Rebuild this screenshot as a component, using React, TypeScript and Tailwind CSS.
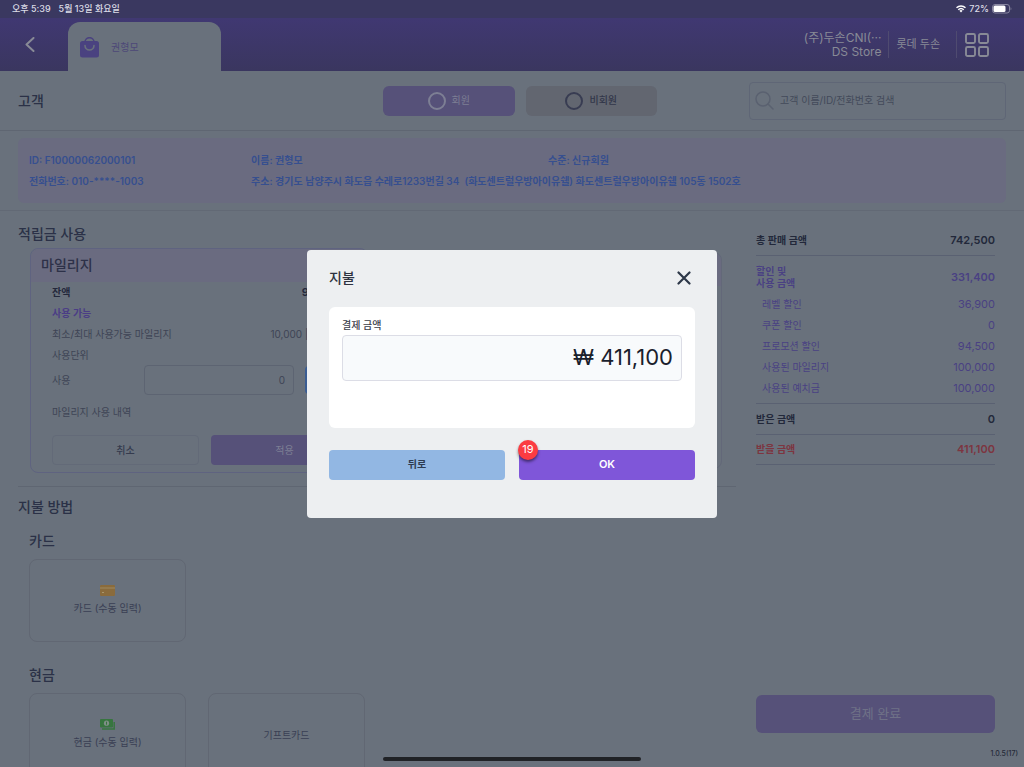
import React from "react";

const METHOD_TILE =
  "flex h-[83px] w-[157px] flex-col items-center justify-center gap-1 rounded-lg border border-[#616773] text-[10px] leading-4 text-[#3a3f54]";

const discounts: [string, string][] = [
  ["레벨 할인", "36,900"],
  ["쿠폰 할인", "0"],
  ["프로모션 할인", "94,500"],
  ["사용된 마일리지", "100,000"],
  ["사용된 예치금", "100,000"],
];

function StatusBar() {
  return (
    <div className="flex h-[18px] shrink-0 items-center justify-between bg-[#3a3860] px-3 text-[9px] font-medium text-[#dcdce6]">
      <div className="flex gap-2">
        <span>오후 5:39</span>
        <span>5월 13일 화요일</span>
      </div>
      <div className="flex items-center gap-[3px]">
        <svg width="10" height="8" viewBox="0 0 20 15" fill="none" stroke="#fff" strokeWidth="2.8">
          <path d="M1 5.2a13 13 0 0 1 18 0M4.5 9a8 8 0 0 1 11 0" />
          <path d="M6.8 11a4.600 4.600 0 0 1 6.400 0L10 14.600z" fill="#fff" stroke="none" />
        </svg>
        <span>72%</span>
        <svg width="20" height="10" viewBox="0 0 20 10">
          <rect x=".5" y=".5" width="17" height="8.5" rx="2.5" fill="none" stroke="#8886a0" />
          <rect x="1.5" y="1.5" width="12" height="6.5" rx="1.5" fill="#fff" />
          <path d="M18.6 3.2v3c1-.4 1-2.600 0-3" fill="#8886a0" />
        </svg>
      </div>
    </div>
  );
}

function NavBar() {
  return (
    <header className="flex h-[53px] shrink-0 items-stretch bg-linear-to-b from-[#403872] to-[#3a365f] text-[#888a96]">
      <button aria-label="뒤로 가기" className="flex w-[68px] items-center pl-[25px]">
        <svg width="10" height="15" viewBox="0 0 10 15" fill="none" stroke="currentColor" strokeWidth="2" strokeLinecap="round" strokeLinejoin="round">
          <path d="M8.500 1 1.500 7.500l7 6.500" />
        </svg>
      </button>
      <button className="mt-1 flex w-[153px] items-center gap-3 rounded-t-xl bg-[#69717c] pt-[2px] pl-3 text-[10px] text-[#4d4878]">
        <svg width="19" height="21" viewBox="0 0 19 21" fill="none">
          <rect y="4" width="19" height="16.500" rx="2.500" fill="#4a4280" />
          <path d="M5 5a4.500 4.300 0 0 1 9 0" stroke="#4a4280" strokeWidth="1.600" />
          <path d="M5 8.500a4.500 4.500 0 0 0 9 0" stroke="#69717c" strokeWidth="1.600" strokeLinecap="round" />
        </svg>
        권형모
      </button>
      <div className="ml-auto flex items-center pr-[35px]">
        <div className="pr-[7px] text-right text-xs leading-[14px]">
          <div>(주)두손CNI(···</div>
          <div>DS Store</div>
        </div>
        <div className="flex h-[27px] items-center border-x border-[#4f4b70] pr-4 pl-[7px] text-[11px]">롯데 두손</div>
        <button aria-label="메뉴" className="ml-2">
          <svg width="24" height="24" viewBox="0 0 24 24" fill="none" stroke="currentColor" strokeWidth="1.900">
            <rect x="1" y="1" width="9" height="9" rx="1.500" />
            <rect x="14" y="1" width="9" height="9" rx="1.500" />
            <rect x="1" y="14" width="9" height="9" rx="1.500" />
            <rect x="14" y="14" width="9" height="9" rx="1.500" />
          </svg>
        </button>
      </div>
    </header>
  );
}

function CustomerBar() {
  return (
    <section className="grid h-[60px] shrink-0 grid-cols-[1fr_274px_349px] items-center border-b border-[#5f6672] px-[18px]">
      <h2 className="text-sm font-medium text-[#2b3147]">고객</h2>
      <div className="flex gap-[11px]">
        <button className="flex h-[30px] flex-1 items-center justify-center gap-[6px] rounded-md bg-[#565179] text-[10px] text-[#7d7f94]">
          <span className="size-[18px] rounded-full border-2 border-[#7d7f94]" />
          회원
        </button>
        <button className="flex h-[30px] flex-1 items-center justify-center gap-[6px] rounded-md bg-[#626670] text-[10px] font-medium text-[#32374a]">
          <span className="size-[18px] rounded-full border-2 border-[#383c52]" />
          비회원
        </button>
      </div>
      <label className="ml-auto flex h-[38px] w-[257px] items-center gap-[6px] rounded border border-[#5f6676] pl-[5px]">
        <svg width="19" height="19" viewBox="0 0 19 19" fill="none" stroke="#5a6170" strokeWidth="1.500" strokeLinecap="round">
          <circle cx="8" cy="8" r="7" />
          <path d="m13 13 5 5" />
        </svg>
        <input aria-label="고객 검색" placeholder="고객 이름/ID/전화번호 검색" className="min-w-0 flex-1 bg-transparent text-[10px] outline-none placeholder:text-[#434a5a]" />
      </label>
    </section>
  );
}

function CustomerInfo() {
  return (
    <section className="shrink-0 border-b border-[#626975] px-[18px] py-[7px]">
      <div className="grid h-[65px] grid-cols-[222px_297px_1fr] content-center gap-y-[5px] rounded-md bg-[#6a6b80] px-[11px] text-[10px] leading-4 font-semibold text-[#364f8f]">
        <span>ID: F10000062000101</span>
        <span>이름: 권형모</span>
        <span>수준: 신규회원</span>
        <span>전화번호: 010-****-1003</span>
        <span className="col-span-2 whitespace-pre">주소: 경기도 남양주시 화도읍 수레로1233번길 34  (화도센트럴우방아이유쉘) 화도센트럴우방아이유쉘 105동 1502호</span>
      </div>
    </section>
  );
}

function Points() {
  return (
    <section className="pb-[13px]">
      <h2 className="pt-[13px] text-sm leading-5 font-medium text-[#2b3147]">적립금 사용</h2>
      <div className="mt-1 ml-3 grid grid-cols-[338px_1fr] items-start gap-4">
        <article className="h-[225px] rounded-lg border border-[#5f6380] text-[10px] text-[#3e4455]">
          <h3 className="flex h-[33px] items-center rounded-t-lg bg-[#6a6b80] px-[10px] pb-[2px] text-sm font-medium text-[#2d3148]">마일리지</h3>
          <div className="pr-[9px] pl-[21px]">
            <div className="flex h-[21px] items-center justify-between font-semibold text-[#23283b]">
              <span>잔액</span>
              <span className="text-[11px]">9,900,000</span>
            </div>
            <div className="flex h-[21px] items-center font-semibold text-[#4b3d86]">사용 가능</div>
            <div className="flex h-[21px] items-center justify-between">
              <span>최소/최대 사용가능 마일리지</span>
              <span>10,000 | 1,000,000</span>
            </div>
            <div className="flex h-5 items-center">사용단위</div>
            <div className="flex h-[30px] items-center">
              <label htmlFor="points" className="w-[92px]">사용</label>
              <input id="points" readOnly value="0" className="h-[30px] w-[150px] rounded border border-[#5d6472] px-2 text-right" />
              <button aria-label="전액 사용" className="ml-[11px] h-[28px] flex-1 rounded bg-[#3a5c92]" />
            </div>
            <div className="mt-[7px] flex h-[21px] items-center">마일리지 사용 내역</div>
            <div className="mt-3 grid h-[30px] grid-cols-2 gap-3">
              <button className="rounded border border-[#636a78] font-medium text-[#353b4e]">취소</button>
              <button className="rounded bg-[#565179] text-[#7d7f94]">적용</button>
            </div>
          </div>
        </article>
        <article className="mt-1 h-[217px] rounded-lg border border-[#636879]">
          <h3 className="flex h-[33px] items-center rounded-t-lg bg-[#6a6b80] px-[10px] text-sm font-medium text-[#2d3148]">예치금</h3>
        </article>
      </div>
    </section>
  );
}

function PaymentMethods() {
  return (
    <section className="text-[#2b3147]">
      <h2 className="pt-[10px] text-sm leading-5 font-medium">지불 방법</h2>
      <div className="pl-[11px]">
        <h3 className="mt-[14px] text-sm leading-5 font-medium">카드</h3>
        <div className="mt-2 flex gap-[22px]">
          <button className={METHOD_TILE}>
            <svg width="15" height="11" viewBox="0 0 15 11">
              <rect width="15" height="11" rx="1.200" fill="#8a6b3c" />
              <path d="M0 3h15" stroke="#9a855c" strokeWidth="1.200" />
              <path d="M2 7.500h2" stroke="#a8966c" />
            </svg>
            카드 (수동 입력)
          </button>
        </div>
        <h3 className="mt-[23px] text-sm leading-5 font-medium">현금</h3>
        <div className="mt-2 flex gap-[22px]">
          <button className={METHOD_TILE}>
            <svg width="15" height="11" viewBox="0 0 15 11">
              <path d="M2 10h12.200V3" fill="none" stroke="#37753f" strokeWidth="1.500" />
              <rect width="13" height="8.500" rx="1" fill="#37753f" />
              <circle cx="6.500" cy="4.200" r="2.600" fill="#7e8f86" />
              <path d="M6.500 2.700v3" stroke="#37753f" />
            </svg>
            현금 (수동 입력)
          </button>
          <button className={METHOD_TILE}>기프트카드</button>
        </div>
      </div>
    </section>
  );
}

function Summary() {
  return (
    <aside className="flex w-[239px] shrink-0 flex-col text-[10px]">
      <div className="mt-[14px] flex h-[31px] items-center justify-between border-b border-[#5a6172] font-semibold text-[#22283a]">
        <span>총 판매 금액</span>
        <span className="text-[11px]">742,500</span>
      </div>
      <div className="border-b border-[#5a6172] pt-[9px] pb-1 text-[#4a4183]">
        <div className="mb-[5px] flex items-center justify-between leading-3 font-semibold">
          <span className="w-[60px]">할인 및<br />사용 금액</span>
          <span className="text-[11px]">331,400</span>
        </div>
        {discounts.map(([label, amount]) => (
          <div key={label} className="flex h-[21px] items-center justify-between pl-[6px]">
            <span>{label}</span>
            <span className="text-[11px]">{amount}</span>
          </div>
        ))}
      </div>
      <div className="flex h-[31px] items-center justify-between border-b border-[#5a6172] font-semibold text-[#22283a]">
        <span>받은 금액</span>
        <span className="text-[11px]">0</span>
      </div>
      <div className="flex h-[30px] items-center justify-between border-b border-[#5a6172] font-semibold text-[#7d3540]">
        <span>받을 금액</span>
        <span className="text-[11px]">411,100</span>
      </div>
      <button className="mt-auto mb-[34px] h-[38px] rounded-md bg-[#565179] text-[13px] text-[#6f7187]">결제 완료</button>
    </aside>
  );
}

function PaymentDialog() {
  return (
    <div className="fixed inset-0 flex items-center justify-center">
      <div role="dialog" aria-labelledby="dialog-title" className="w-[410px] rounded bg-[#edeff1] px-[22px] pt-[18px] pb-[38px]">
        <div className="flex items-center justify-between pr-1">
          <h2 id="dialog-title" className="text-sm leading-5 font-medium text-[#2e3340]">지불</h2>
          <button aria-label="닫기">
            <svg width="14" height="14" viewBox="0 0 14 14" stroke="#2d3748" strokeWidth="2.200" strokeLinecap="round">
              <path d="m1.500 1.500 11 11m0-11-11 11" />
            </svg>
          </button>
        </div>
        <div className="mt-[19px] h-[121px] rounded-md bg-white px-[13px] pt-[10px]">
          <label htmlFor="amount" className="block text-[10px] leading-4 font-medium text-[#3c404a]">결제 금액</label>
          <input id="amount" readOnly value="₩ 411,100" className="mt-[2px] h-[46px] w-full rounded border border-[#dcdde6] bg-[#f8fafc] px-2 pb-[2px] text-right text-[22px] text-[#1a202c]" />
        </div>
        <div className="mt-[22px] grid grid-cols-2 gap-[14px]">
          <button className="h-[30px] rounded bg-[#92b7e3] text-[10px] font-semibold text-[#2d3b50]">뒤로</button>
          <div className="relative flex">
            <button className="h-[30px] flex-1 rounded bg-[#7f56d9] text-[11px] font-semibold text-white">OK</button>
            <span className="absolute -top-[10px] -left-px flex size-5 items-center justify-center rounded-full bg-[#fb3c42] text-[11px] text-white shadow-[0_2px_3px_rgba(0,0,0,0.5)]">19</span>
          </div>
        </div>
      </div>
    </div>
  );
}

export default function App() {
  return (
    <div className="relative flex h-screen flex-col overflow-hidden bg-[#69717c] font-[Inter,'Noto_Sans_CJK_KR',sans-serif]">
      <StatusBar />
      <NavBar />
      <CustomerBar />
      <CustomerInfo />
      <main className="flex min-h-0 flex-1 justify-between pr-[29px] pl-[18px]">
        <div className="min-w-0 flex-1 overflow-hidden">
          <div className="mr-[20px] border-b border-[#5f6672] pr-[14px]">
            <Points />
          </div>
          <PaymentMethods />
        </div>
        <Summary />
      </main>
      <span className="absolute right-[6px] bottom-2 text-[7px] font-medium text-[#252a38]">1.0.5(17)</span>
      <div className="absolute bottom-[6px] left-1/2 h-1 w-[258px] -translate-x-1/2 rounded-full bg-[#202226]" />
      <PaymentDialog />
    </div>
  );
}
